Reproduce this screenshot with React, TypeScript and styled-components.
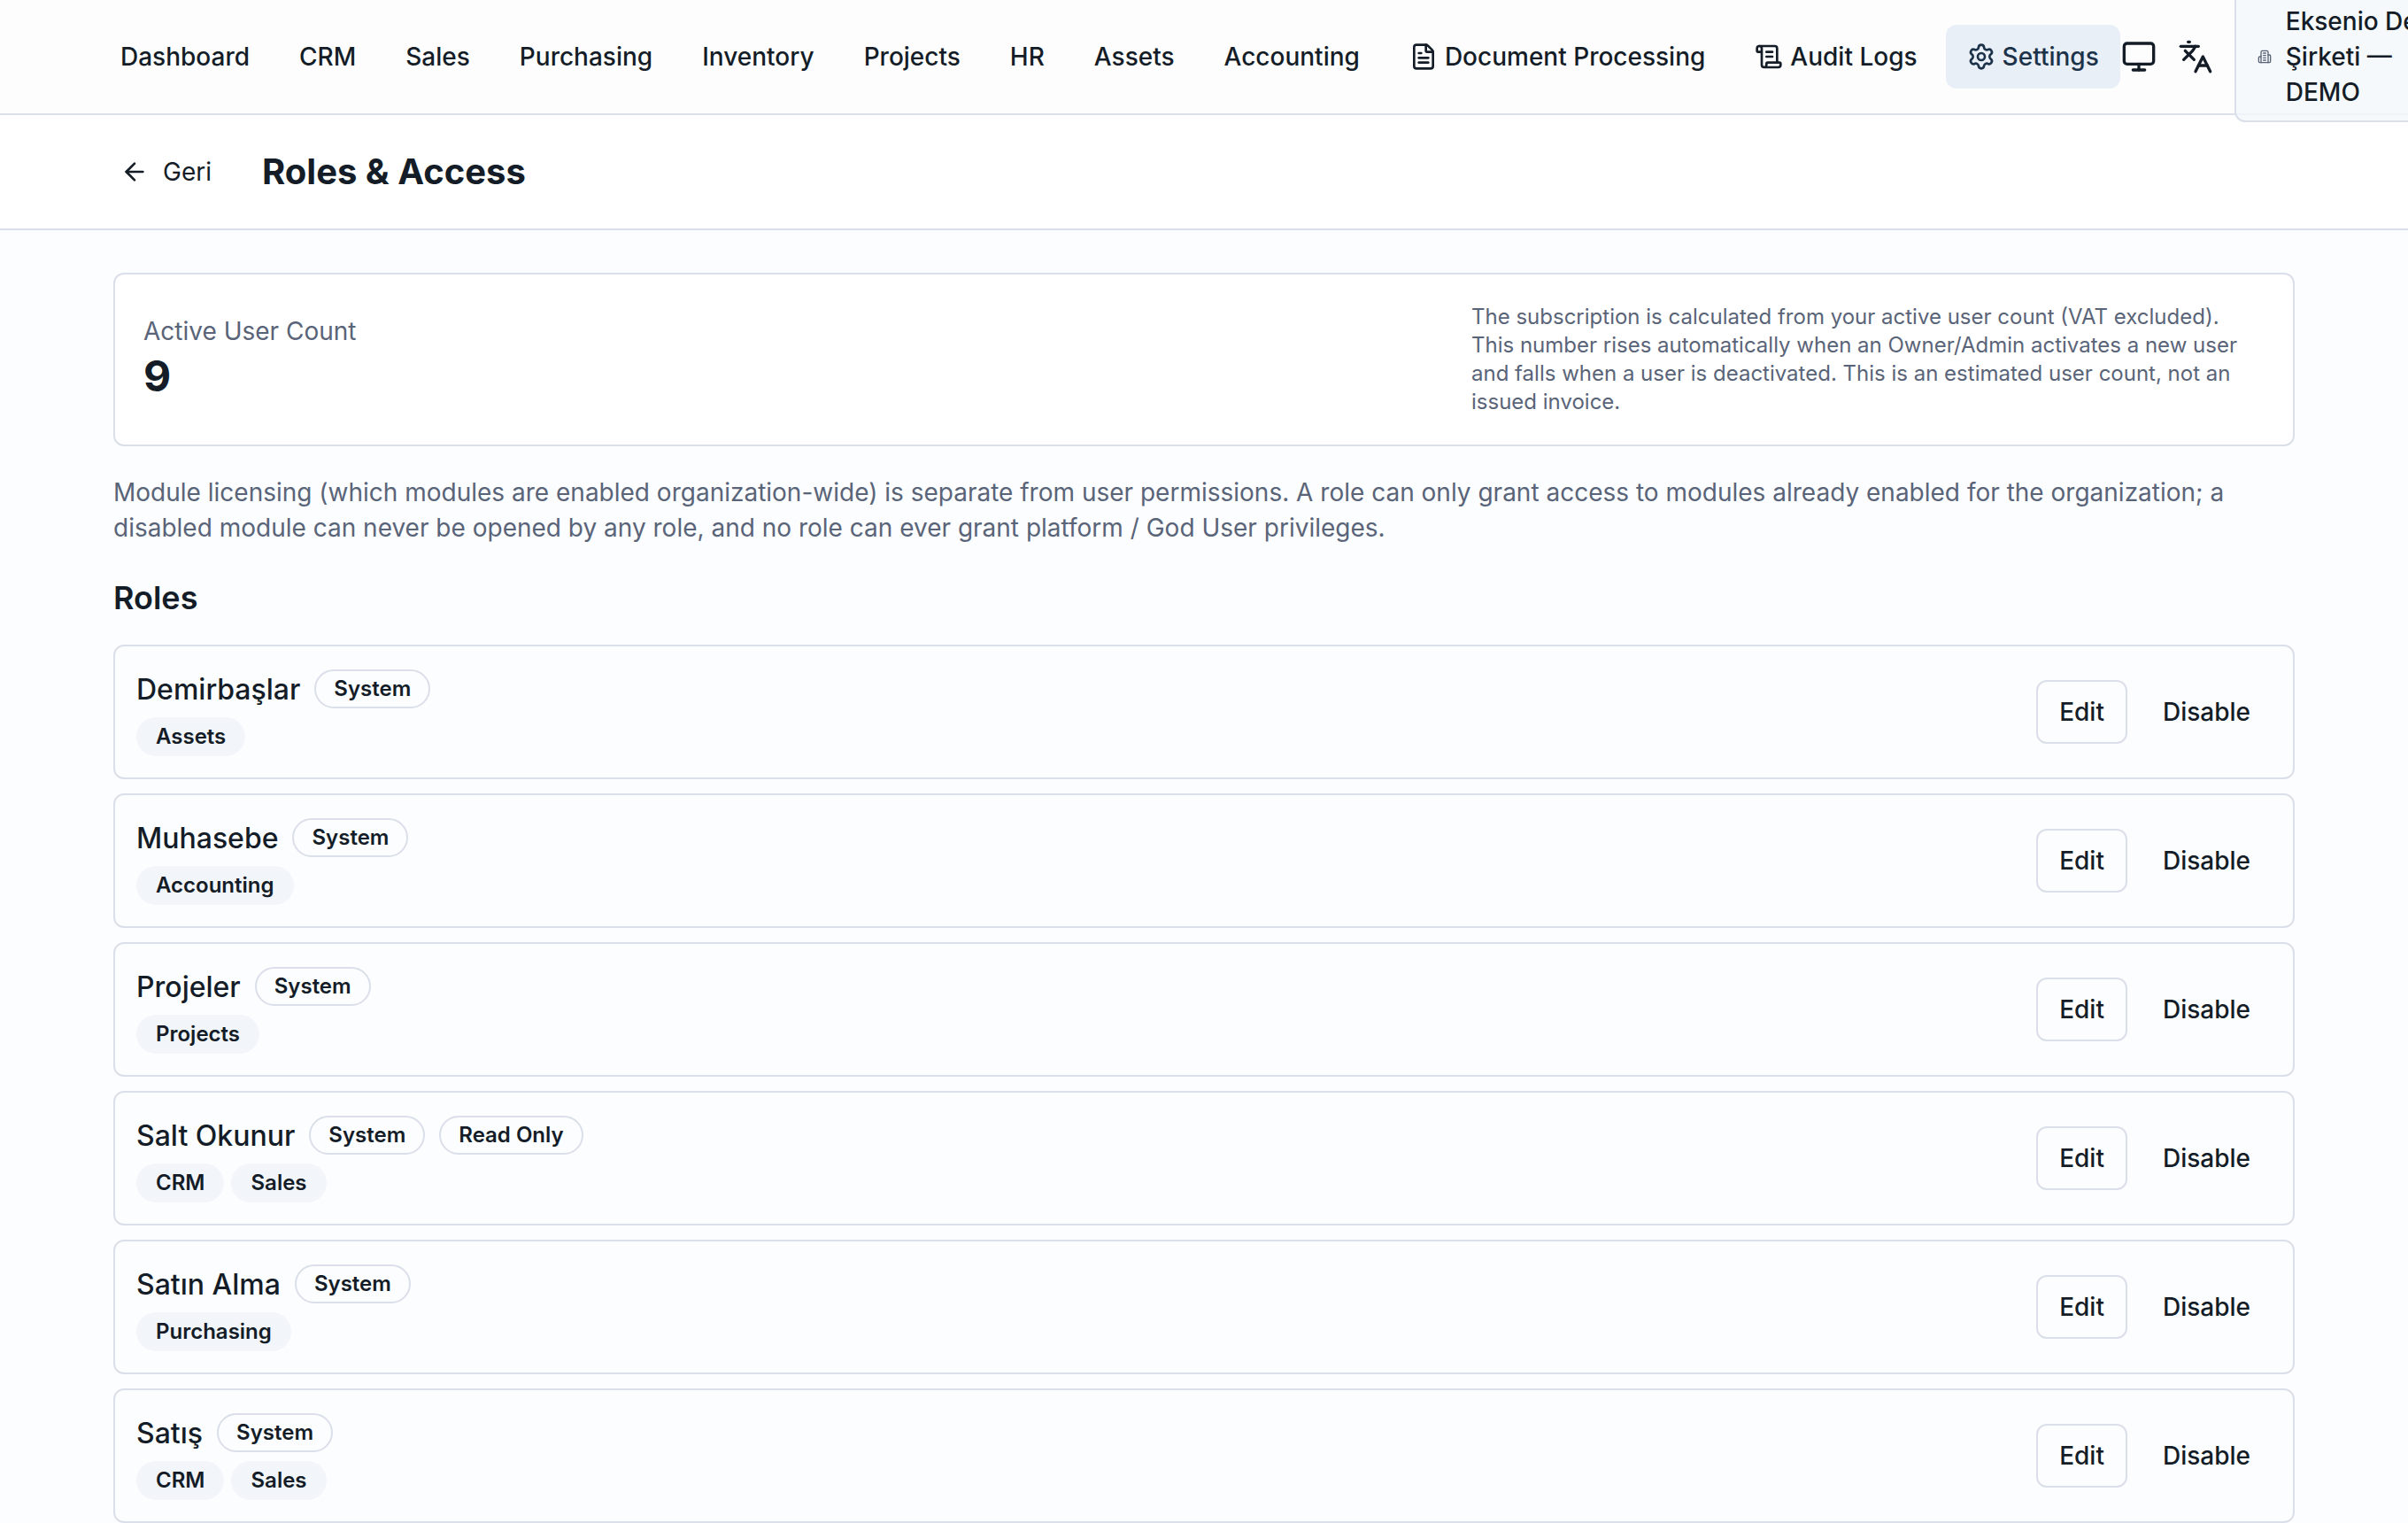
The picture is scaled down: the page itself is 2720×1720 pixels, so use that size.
import React from "react";
import styled, { createGlobalStyle, css } from "styled-components";
import { ArrowLeft, FileText, Languages, Monitor, ScrollText, Settings } from "lucide-react";

const color = {
  page: "#fbfdff",
  card: "#ffffff",
  header: "#fdfdfe",
  border: "#dbdfe9",
  text: "#141d27",
  muted: "#5a6478",
  accent: "#e9eff7",
  accentText: "#1c3249",
  soft: "#f2f5fa",
};

const GlobalStyle = createGlobalStyle`
  *, *::before, *::after { box-sizing: border-box; }
  html, body { margin: 0; padding: 0; }
  body {
    height: 1720px;
    overflow: hidden;
    background: ${color.page};
    color: ${color.text};
    font-family: Inter, "Liberation Sans", sans-serif;
    font-size: 28px;
    line-height: 40px;
  }
  h1, h2, p { margin: 0; }
  button { font: inherit; color: inherit; background: none; border: 0; padding: 0; }
`;

const Page = styled.div`
  width: 2720px;
  height: 1720px;
  overflow: hidden;
`;

const TopBar = styled.header`
  display: flex;
  align-items: center;
  height: 130px;
  padding-left: 112px;
  background: ${color.header};
  border-bottom: 2px solid ${color.border};
`;

const Nav = styled.nav`
  display: flex;
  flex: none;
  gap: 8px;
`;

const NavItem = styled.a<{ $active?: boolean }>`
  display: flex;
  align-items: center;
  gap: 8px;
  height: 72px;
  padding: 0 24px;
  border-radius: 12px;
  font-weight: 500;
  white-space: nowrap;
  ${(p) => p.$active && css`
    background: ${color.accent};
    color: ${color.accentText};
  `}
`;

const Tools = styled.div`
  display: flex;
  flex: none;
  align-items: center;
  gap: 24px;
  margin-left: 1px;
`;

const ToolButton = styled.button`
  display: flex;
`;

const OrgSwitcher = styled.div`
  position: relative;
  display: flex;
  flex: none;
  align-items: center;
  gap: 16px;
  padding: 12px 24px;
  border: 2px solid ${color.border};
  border-radius: 12px;
  background: rgba(244, 247, 251, 0.8);
  font-weight: 500;
`;

const OrgIcon = styled.svg`
  flex: none;
  width: 16px;
  height: 32px;
  color: ${color.muted};
`;

const OrgName = styled.span`
  flex: none;
  width: 196px;
`;

const TitleBar = styled.div`
  display: flex;
  align-items: center;
  gap: 33px;
  height: 130px;
  padding: 0 128px 0 112px;
  background: ${color.card};
  border-bottom: 2px solid ${color.border};
`;

const BackButton = styled.button`
  display: flex;
  align-items: center;
  gap: 16px;
  height: 72px;
  padding: 0 24px;
`;

const Title = styled.h1`
  font-size: 40px;
  line-height: 56px;
  font-weight: 700;
`;

const Main = styled.main`
  display: flex;
  flex-direction: column;
  gap: 32px;
  padding: 48px 128px 0;
`;

const CountCard = styled.section`
  display: flex;
  align-items: center;
  justify-content: space-between;
  padding: 32px;
  background: ${color.card};
  border: 2px solid ${color.border};
  border-radius: 12px;
`;

const CountLabel = styled.p`
  color: ${color.muted};
`;

const CountValue = styled.p`
  padding-bottom: 2px;
  font-size: 48px;
  line-height: 62px;
  font-weight: 700;
`;

const CountNote = styled.p`
  width: 896px;
  font-size: 24px;
  line-height: 32px;
  color: ${color.muted};
`;

const Intro = styled.p`
  color: ${color.muted};
`;

const RolesSection = styled.section`
  display: flex;
  flex-direction: column;
  gap: 16px;
`;

const SectionTitle = styled.h2`
  margin-bottom: 10px;
  font-size: 36px;
  line-height: 54px;
  font-weight: 600;
`;

const RoleCard = styled.article`
  display: flex;
  align-items: center;
  justify-content: space-between;
  height: 152px;
  padding: 24px;
  border: 2px solid ${color.border};
  border-radius: 12px;
`;

const RoleInfo = styled.div`
  display: flex;
  flex-direction: column;
  gap: 8px;
`;

const RoleHeading = styled.div`
  display: flex;
  align-items: center;
  gap: 16px;
  height: 48px;
`;

const RoleName = styled.span`
  padding-top: 2px;
  font-size: 32px;
  line-height: 48px;
  font-weight: 500;
`;

const Modules = styled.div`
  display: flex;
  gap: 8px;
`;

const Badge = styled.span<{ $soft?: boolean }>`
  padding: 4px 20px;
  border: 2px solid ${(p) => (p.$soft ? "transparent" : color.border)};
  border-radius: 22px;
  background: ${(p) => (p.$soft ? color.soft : "transparent")};
  font-size: 24px;
  line-height: 32px;
  font-weight: 600;
`;

const Actions = styled.div`
  display: flex;
  gap: 16px;
`;

const ActionButton = styled.button<{ $outlined?: boolean }>`
  height: 72px;
  padding: 0 24px;
  border-radius: 12px;
  font-weight: 500;
  ${(p) => p.$outlined && css`
    border: 2px solid ${color.border};
  `}
`;

function BuildingIcon() {
  return (
    <OrgIcon viewBox="0 0 24 24" fill="none" stroke="currentColor" strokeWidth="2" strokeLinecap="round" strokeLinejoin="round">
      <path d="M6 22V4a2 2 0 0 1 2-2h8a2 2 0 0 1 2 2v18Z" />
      <path d="M6 12H4a2 2 0 0 0-2 2v6a2 2 0 0 0 2 2h2" />
      <path d="M18 9h2a2 2 0 0 1 2 2v9a2 2 0 0 1-2 2h-2" />
      <path d="M10 6h4M10 10h4M10 14h4M10 18h4" />
    </OrgIcon>
  );
}

const links = ["Dashboard", "CRM", "Sales", "Purchasing", "Inventory", "Projects", "HR", "Assets", "Accounting"];

const roles = [
  { name: "Demirbaşlar", tags: ["System"], modules: ["Assets"] },
  { name: "Muhasebe", tags: ["System"], modules: ["Accounting"] },
  { name: "Projeler", tags: ["System"], modules: ["Projects"] },
  { name: "Salt Okunur", tags: ["System", "Read Only"], modules: ["CRM", "Sales"] },
  { name: "Satın Alma", tags: ["System"], modules: ["Purchasing"] },
  { name: "Satış", tags: ["System"], modules: ["CRM", "Sales"] },
];

export default function App() {
  return (
    <Page>
      <GlobalStyle />
      <TopBar>
        <Nav>
          {links.map((label) => (
            <NavItem key={label}>{label}</NavItem>
          ))}
          <NavItem><FileText size={32} />Document Processing</NavItem>
          <NavItem><ScrollText size={32} />Audit Logs</NavItem>
          <NavItem $active><Settings size={32} />Settings</NavItem>
        </Nav>
        <Tools>
          <ToolButton><Monitor size={40} /></ToolButton>
          <ToolButton><Languages size={40} /></ToolButton>
          <OrgSwitcher>
            <BuildingIcon />
            <OrgName>Eksenio Demo Şirketi — DEMO</OrgName>
          </OrgSwitcher>
        </Tools>
      </TopBar>
      <TitleBar>
        <BackButton><ArrowLeft size={32} />Geri</BackButton>
        <Title>Roles &amp; Access</Title>
      </TitleBar>
      <Main>
        <CountCard>
          <div>
            <CountLabel>Active User Count</CountLabel>
            <CountValue>9</CountValue>
          </div>
          <CountNote>
            The subscription is calculated from your active user count (VAT excluded). This number rises
            automatically when an Owner/Admin activates a new user and falls when a user is deactivated. This is
            an estimated user count, not an issued invoice.
          </CountNote>
        </CountCard>
        <Intro>
          Module licensing (which modules are enabled organization-wide) is separate from user permissions. A role
          can only grant access to modules already enabled for the organization; a disabled module can never be
          opened by any role, and no role can ever grant platform / God User privileges.
        </Intro>
        <RolesSection>
          <SectionTitle>Roles</SectionTitle>
          {roles.map((role) => (
            <RoleCard key={role.name}>
              <RoleInfo>
                <RoleHeading>
                  <RoleName>{role.name}</RoleName>
                  {role.tags.map((tag) => (
                    <Badge key={tag}>{tag}</Badge>
                  ))}
                </RoleHeading>
                <Modules>
                  {role.modules.map((module) => (
                    <Badge key={module} $soft>{module}</Badge>
                  ))}
                </Modules>
              </RoleInfo>
              <Actions>
                <ActionButton $outlined>Edit</ActionButton>
                <ActionButton>Disable</ActionButton>
              </Actions>
            </RoleCard>
          ))}
        </RolesSection>
      </Main>
    </Page>
  );
}
